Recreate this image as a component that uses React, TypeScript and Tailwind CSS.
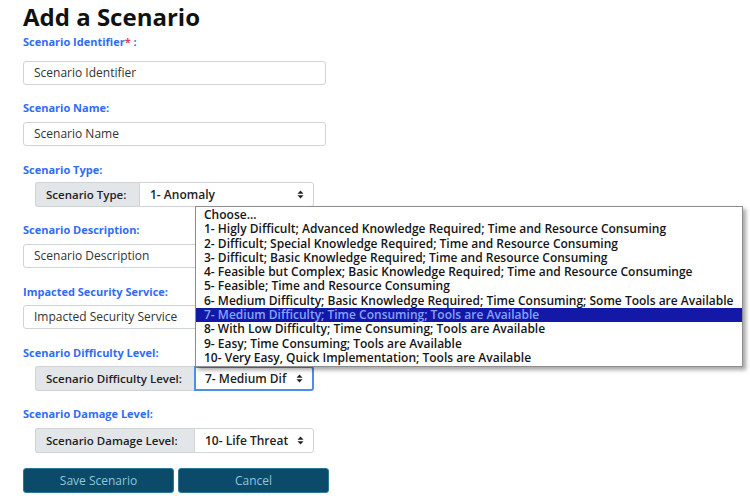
import React from "react";

const fontStack = { fontFamily: '"Open Sans", "Noto Sans", sans-serif' };

const difficultyOptions = [
  "Choose...",
  "1- Higly Difficult; Advanced Knowledge Required; Time and Resource Consuming",
  "2- Difficult; Special Knowledge Required; Time and Resource Consuming",
  "3- Difficult; Basic Knowledge Required; Time and Resource Consuming",
  "4- Feasible but Complex; Basic Knowledge Required; Time and Resource Consuminge",
  "5- Feasible; Time and Resource Consuming",
  "6- Medium Difficulty; Basic Knowledge Required; Time Consuming; Some Tools are Available",
  "7- Medium Difficulty; Time Consuming; Tools are Available",
  "8- With Low Difficulty; Time Consuming; Tools are Available",
  "9- Easy; Time Consuming; Tools are Available",
  "10- Very Easy, Quick Implementation; Tools are Available",
];

function Label({ children, className = "" }: { children: React.ReactNode; className?: string }) {
  return (
    <div className={`h-[14px] text-[11px] leading-[14px] font-bold text-[#2f6cf6] ${className}`}>
      {children}
    </div>
  );
}

function TextInput({ placeholder }: { placeholder: string }) {
  return (
    <div className="flex h-[24px] w-[303px] items-center rounded-[3px] border border-[#cfd4d9] bg-white pl-[10px] text-[12px] text-[#333]">
      {placeholder}
    </div>
  );
}

function Arrows() {
  return (
    <svg width="7" height="9" viewBox="0 0 7 9" className="shrink-0">
      <path d="M3.5 0.5 L6.5 3.8 H0.5 Z" fill="#222" />
      <path d="M3.5 8.5 L6.5 5.2 H0.5 Z" fill="#222" />
    </svg>
  );
}

function SelectGroup({
  label,
  value,
  labelWidth,
  focused = false,
}: {
  label: string;
  value: string;
  labelWidth: string;
  focused?: boolean;
}) {
  return (
    <div className="ml-[12px] flex h-[25px] w-[279px]">
      <div
        className={`flex h-full ${labelWidth} items-center rounded-l-[3px] border border-r-0 border-[#cfd4d9] bg-[#e3e6e9] pl-[10px] text-[11.5px] font-semibold text-[#222]`}
      >
        {label}
      </div>
      <div
        className={`flex h-full flex-1 items-center justify-between overflow-hidden rounded-r-[3px] bg-white pr-[9px] text-[12px] font-semibold text-[#222] ${
          focused ? "border-2 border-[#4d8fe8] pl-[9px]" : "border border-[#cfd4d9] pl-[10px]"
        }`}
      >
        <span className="whitespace-nowrap">{value}</span>
        <Arrows />
      </div>
    </div>
  );
}

export default function App() {
  return (
    <div className="relative h-[500px] w-[750px] overflow-hidden bg-white pl-[23px]" style={fontStack}>
      <h1 className="pt-[3px] text-[24px] leading-[28px] font-bold text-[#111]">Add a Scenario</h1>

      <Label className="mt-[4px]">
        Scenario Identifier<span className="text-[#e0405a]">*</span> :
      </Label>
      <div className="mt-[12px]">
        <TextInput placeholder="Scenario Identifier" />
      </div>

      <Label className="mt-[16px]">Scenario Name:</Label>
      <div className="mt-[7px]">
        <TextInput placeholder="Scenario Name" />
      </div>

      <Label className="mt-[17px]">Scenario Type:</Label>
      <div className="mt-[5px]">
        <SelectGroup label="Scenario Type:" value="1- Anomaly" labelWidth="w-[104px]" />
      </div>

      <Label className="mt-[16px]">Scenario Description:</Label>
      <div className="mt-[7px]">
        <TextInput placeholder="Scenario Description" />
      </div>

      <Label className="mt-[17px]">Impacted Security Service:</Label>
      <div className="mt-[6px]">
        <TextInput placeholder="Impacted Security Service" />
      </div>

      <Label className="mt-[17px]">Scenario Difficulty Level:</Label>
      <div className="mt-[6px]">
        <SelectGroup
          label="Scenario Difficulty Level:"
          value="7- Medium Dif"
          labelWidth="w-[159px]"
          focused
        />
      </div>

      <Label className="mt-[16px]">Scenario Damage Level:</Label>
      <div className="mt-[7px]">
        <SelectGroup label="Scenario Damage Level:" value="10- Life Threat" labelWidth="w-[159px]" />
      </div>

      <div className="mt-[15px] flex gap-[4px]">
        <button className="h-[25px] w-[151px] rounded-[3px] border border-[#2d7898] bg-[#0b4a68] text-[12px] text-[#8cc8dc]">
          Save Scenario
        </button>
        <button className="h-[25px] w-[151px] rounded-[3px] border border-[#2d7898] bg-[#0b4a68] text-[12px] text-[#8cc8dc]">
          Cancel
        </button>
      </div>

      <ul className="absolute left-[195px] top-[206px] w-[548px] border border-[#8e8e8e] bg-white py-[1px] shadow-[3px_3px_4px_rgba(0,0,0,0.35)]">
        {difficultyOptions.map((opt, i) => (
          <li
            key={opt}
            className={`h-[14.3px] whitespace-nowrap pl-[8px] text-[12px] leading-[14.3px] font-semibold ${
              i === 7 ? "bg-[#1418a6] font-normal text-[#86a2ff]" : "text-[#151515]"
            }`}
          >
            {opt}
          </li>
        ))}
      </ul>
    </div>
  );
}
